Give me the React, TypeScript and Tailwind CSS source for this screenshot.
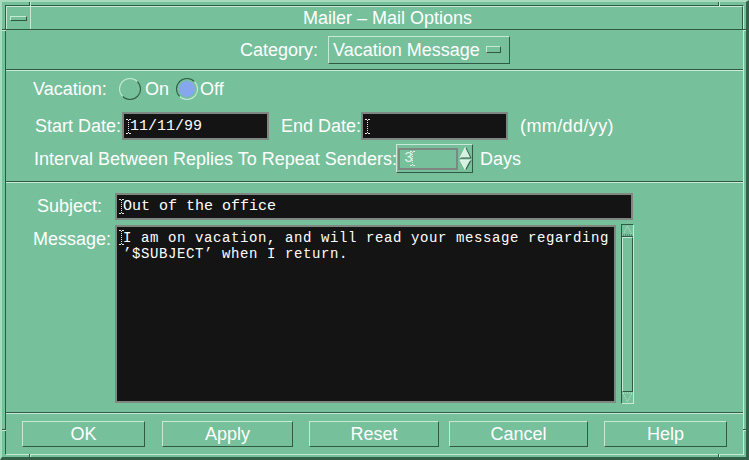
import React from "react";

function IBeam() {
  return (
    <svg width="5" height="15" viewBox="0 0 5 15" className="shrink-0">
      <path d="M0 0.5H2M3 0.5H5M0 14.5H2M3 14.5H5" stroke="#e8e8e8" strokeWidth="1" />
      <line x1="2.5" y1="1" x2="2.5" y2="14" stroke="#e8e8e8" strokeWidth="1" strokeDasharray="1 1" />
    </svg>
  );
}

function Radio({ on }: { on: boolean }) {
  if (on) {
    return (
      <div className="w-[22px] h-[22px] rounded-full border border-t-[#2f5a43] border-l-[#2f5a43] border-r-[#c6ead6] border-b-[#c6ead6] flex items-center justify-center shrink-0">
        <div className="w-[16px] h-[16px] rounded-full bg-[#86a7ee]" />
      </div>
    );
  }
  return (
    <div className="w-[22px] h-[22px] rounded-full border border-t-[#c6ead6] border-l-[#c6ead6] border-r-[#2f5a43] border-b-[#2f5a43] shrink-0" />
  );
}

function Btn({ label, w, ml }: { label: string; w: string; ml: string }) {
  return (
    <div
      className={`${w} ${ml} h-[26px] border border-t-[#c6ead6] border-l-[#c6ead6] border-r-[#2f5a43] border-b-[#2f5a43] flex items-center justify-center text-[18px] leading-none shrink-0`}
    >
      {label}
    </div>
  );
}

function Tick({ cls }: { cls: string }) {
  return <div className={`absolute ${cls}`} />;
}

export default function App() {
  return (
    <div className="relative w-[749px] h-[460px] overflow-hidden bg-[#76c09b] text-white font-['Liberation_Sans',Arial,sans-serif] border-t-2 border-l-2 border-r-[3px] border-b-[3px] border-t-[#a8dabd] border-l-[#a8dabd] border-r-[#34604a] border-b-[#34604a] pt-[3px] pl-[3px] pr-[2px] pb-[2px] flex">
      {/* inner frame */}
      <div className="flex-1 flex flex-col border border-t-[#2f5a43] border-l-[#2f5a43] border-r-[#c6ead6] border-b-[#c6ead6]">
        {/* title bar */}
        <div className="h-[24px] shrink-0 flex border-b border-b-[#2f5a43]">
          <div className="w-[24px] border-t border-l border-t-[#c6ead6] border-l-[#c6ead6] flex items-center justify-center">
            <div className="w-[17px] h-[5px] border border-t-[#c6ead6] border-l-[#c6ead6] border-r-[#2f5a43] border-b-[#2f5a43]" />
          </div>
          <div className="flex-1 border-t border-l border-r border-t-[#c6ead6] border-l-[#c6ead6] border-r-[#2f5a43] flex items-center justify-center text-[18px] leading-none pl-[2px]">
            Mailer – Mail Options
          </div>
        </div>

        {/* category */}
        <div className="h-[39px] shrink-0 flex items-center justify-center gap-[10px] pl-[1px]">
          <span className="text-[18px] leading-none">Category:</span>
          <div className="w-[182px] h-[28px] border border-t-[#c6ead6] border-l-[#c6ead6] border-r-[#2f5a43] border-b-[#2f5a43] flex items-center justify-between pl-[4px] pr-[8px]">
            <span className="text-[18px] leading-none">Vacation Message</span>
            <div className="w-[15px] h-[7px] border border-t-[#c6ead6] border-l-[#c6ead6] border-r-[#2f5a43] border-b-[#2f5a43]" />
          </div>
        </div>

        <div className="h-[2px] shrink-0 border-t border-b border-t-[#2f5a43] border-b-[#c6ead6]" />

        {/* vacation settings */}
        <div className="h-[110px] shrink-0 pt-[7px] pl-[27px] flex flex-col text-[18px] leading-none">
          <div className="h-[22px] flex items-center">
            <span className="w-[86px] shrink-0">Vacation:</span>
            <Radio on={false} />
            <span className="ml-[4px] w-[31px] shrink-0">On</span>
            <Radio on={true} />
            <span className="ml-[2px]">Off</span>
          </div>
          <div className="h-[28px] mt-[12px] flex items-center">
            <span className="ml-[2px] w-[87px] shrink-0 whitespace-nowrap">Start Date:</span>
            <div className="w-[147px] h-[28px] shrink-0 bg-[#141414] border-2 border-[#7f8782] flex items-center pl-[2px] font-['Liberation_Mono',monospace] text-[15px]">
              <IBeam />
              <span className="ml-[-1px]">11/11/99</span>
            </div>
            <span className="ml-[12px] w-[80px] shrink-0 whitespace-nowrap">End Date:</span>
            <div className="w-[147px] h-[28px] shrink-0 bg-[#141414] border-2 border-[#7f8782] flex items-center pl-[2px]">
              <IBeam />
            </div>
            <span className="ml-[12px] whitespace-nowrap tracking-[0.4px]">(mm/dd/yy)</span>
          </div>
          <div className="h-[29px] mt-[4px] flex items-center">
            <span className="ml-[1px] w-[362px] shrink-0 whitespace-nowrap">Interval Between Replies To Repeat Senders:</span>
            <div className="w-[77px] h-[29px] shrink-0 border border-t-[#c6ead6] border-l-[#c6ead6] border-r-[#2f5a43] border-b-[#2f5a43] flex items-center pl-[1px]">
              <div className="w-[60px] h-[22px] border-2 border-[#7f8782] flex items-center pl-[4px] font-['Liberation_Mono',monospace] text-[15px] text-[#e6f2ea]">
                <span>3</span>
                <span className="ml-[-3px] flex"><IBeam /></span>
              </div>
              <div className="ml-[1px] w-[13px] flex flex-col">
                <svg width="13" height="13" viewBox="0 0 13 13">
                  <polygon points="6.5,1 12,12 1,12" fill="#d4f0e0" />
                  <polyline points="6.5,1 12,12 1,12" fill="none" stroke="#2f5a43" strokeWidth="1" />
                  <polyline points="1,12 6.5,1" fill="none" stroke="#eaf8f0" strokeWidth="1" />
                </svg>
                <svg width="13" height="12" viewBox="0 0 13 12">
                  <polygon points="1,1 12,1 6.5,11" fill="#d4f0e0" />
                  <polyline points="12,1 6.5,11" fill="none" stroke="#2f5a43" strokeWidth="1.2" />
                  <polyline points="6.5,11 1,1 12,1" fill="none" stroke="#eaf8f0" strokeWidth="1" />
                </svg>
              </div>
            </div>
            <span className="ml-[7px]">Days</span>
          </div>
        </div>

        <div className="h-[2px] shrink-0 border-t border-b border-t-[#2f5a43] border-b-[#c6ead6]" />

        {/* subject / message */}
        <div className="h-[229px] shrink-0 pt-[10px] flex flex-col text-[18px] leading-none">
          <div className="h-[27px] flex items-center">
            <span className="ml-[31px] w-[78px] shrink-0 mt-[-2px]">Subject:</span>
            <div className="w-[518px] h-[27px] bg-[#141414] border-2 border-[#7f8782] flex items-center pl-[2px] font-['Liberation_Mono',monospace] text-[15px]">
              <IBeam />
              <span className="ml-[-1px]">Out of the office</span>
            </div>
          </div>
          <div className="h-[178px] mt-[5px] flex">
            <span className="ml-[27px] w-[82px] shrink-0 pt-[5px]">Message:</span>
            <div className="w-[501px] h-[178px] shrink-0 bg-[#141414] border-2 border-[#7f8782] pl-[2px] pt-[3px] font-['Liberation_Mono',monospace] text-[14px] tracking-[0.6px] leading-[16px]">
              <div className="flex items-start">
                <span className="flex"><IBeam /></span>
                <span className="ml-[-1px] whitespace-pre">I am on vacation, and will read your message regarding</span>
              </div>
              <div className="pl-[4px] whitespace-pre">’$SUBJECT’ when I return.</div>
            </div>
            <div className="ml-[5px] mt-[-1px] w-[13px] h-[180px] shrink-0 border border-t-[#2f5a43] border-l-[#2f5a43] border-r-[#c6ead6] border-b-[#c6ead6] flex flex-col">
              <svg width="11" height="11" viewBox="0 0 11 11" className="shrink-0">
                <polyline points="1,10 5.5,1 10,10" fill="none" stroke="#c6ead6" strokeWidth="1" strokeDasharray="1 1" />
                <line x1="1" y1="10" x2="10" y2="10" stroke="#2f5a43" strokeWidth="1" strokeDasharray="1 1" />
              </svg>
              <div className="flex-1 border-t border-t-[#2f5a43] flex">
                <div className="flex-1 border border-t-[#c6ead6] border-l-[#c6ead6] border-r-[#2f5a43] border-b-[#2f5a43]" />
              </div>
              <svg width="11" height="11" viewBox="0 0 11 11" className="shrink-0">
                <polyline points="1,1 5.5,10 10,1" fill="none" stroke="#c6ead6" strokeWidth="1" strokeDasharray="1 1" />
                <line x1="1" y1="1" x2="10" y2="1" stroke="#c6ead6" strokeWidth="1" strokeDasharray="1 1" />
              </svg>
            </div>
          </div>
        </div>

        <div className="h-[2px] shrink-0 border-t border-b border-t-[#2f5a43] border-b-[#c6ead6]" />

        {/* buttons */}
        <div className="flex-1 pt-[7px] flex items-start">
          <Btn label="OK" w="w-[123px]" ml="ml-[16px]" />
          <Btn label="Apply" w="w-[131px]" ml="ml-[17px]" />
          <Btn label="Reset" w="w-[130px]" ml="ml-[16px]" />
          <Btn label="Cancel" w="w-[139px]" ml="ml-[10px]" />
          <Btn label="Help" w="w-[123px]" ml="ml-[16px]" />
        </div>
      </div>

      {/* resize corner ticks on the frame */}
      <Tick cls="top-[-2px] left-[27px] w-[1px] h-[6px] bg-[#2f5a43]" />
      <Tick cls="top-[-2px] left-[28px] w-[1px] h-[6px] bg-[#c6ead6]" />
      <Tick cls="top-[-2px] left-[716px] w-[1px] h-[6px] bg-[#2f5a43]" />
      <Tick cls="top-[-2px] left-[717px] w-[1px] h-[6px] bg-[#c6ead6]" />
      <Tick cls="top-[27px] left-[-2px] w-[6px] h-[1px] bg-[#2f5a43]" />
      <Tick cls="top-[28px] left-[-2px] w-[6px] h-[1px] bg-[#c6ead6]" />
      <Tick cls="top-[27px] left-[741px] w-[6px] h-[1px] bg-[#2f5a43]" />
      <Tick cls="top-[28px] left-[741px] w-[6px] h-[1px] bg-[#c6ead6]" />
      <Tick cls="top-[427px] left-[-2px] w-[6px] h-[1px] bg-[#2f5a43]" />
      <Tick cls="top-[428px] left-[-2px] w-[6px] h-[1px] bg-[#c6ead6]" />
      <Tick cls="top-[427px] left-[741px] w-[6px] h-[1px] bg-[#2f5a43]" />
      <Tick cls="top-[428px] left-[741px] w-[6px] h-[1px] bg-[#c6ead6]" />
      <Tick cls="top-[452px] left-[27px] w-[1px] h-[6px] bg-[#2f5a43]" />
      <Tick cls="top-[452px] left-[28px] w-[1px] h-[6px] bg-[#c6ead6]" />
      <Tick cls="top-[452px] left-[716px] w-[1px] h-[6px] bg-[#2f5a43]" />
      <Tick cls="top-[452px] left-[717px] w-[1px] h-[6px] bg-[#c6ead6]" />
    </div>
  );
}
